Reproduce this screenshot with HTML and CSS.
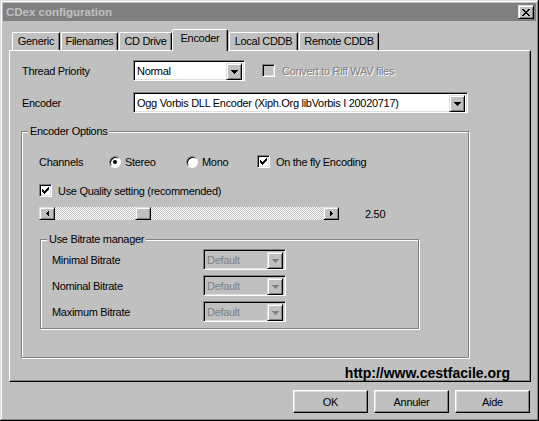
FILE: index.html
```html
<!DOCTYPE html>
<html lang="en">
<head>
    <meta charset="UTF-8">
    <title>CDex configuration</title>
    <link rel="stylesheet" href="styles.css">
</head>
<body>
<div class="window">
    <div class="titlebar">
        <span class="title">CDex configuration</span>
        <span class="close">
            <svg width="8" height="7" viewBox="0 0 8 7"><path d="M0 0h2v1H0zM6 0h2v1H6zM1 1h2v1H1zM5 1h2v1H5zM2 2h4v1H2zM3 3h2v1H3zM2 4h4v1H2zM1 5h2v1H1zM5 5h2v1H5zM0 6h2v1H0zM6 6h2v1H6z"/></svg>
        </span>
    </div>
    <div class="dialog">
        <div class="tabs">
            <div class="tab t-generic">Generic</div>
            <div class="tab t-files">Filenames</div>
            <div class="tab t-drive">CD Drive</div>
            <div class="tab t-enc active">Encoder</div>
            <div class="tab t-local">Local CDDB</div>
            <div class="tab t-remote">Remote CDDB</div>
        </div>
        <div class="panel">
            <div class="row">
                <span class="lbl">Thread Priority</span>
                <div class="select sel-prio">
                    <span class="val">Normal</span>
                    <span class="drop"><svg width="7" height="4" viewBox="0 0 7 4"><path d="M0 0h7v1H0zM1 1h5v1H1zM2 2h3v1H2zM3 3h1v1H3z"/></svg></span>
                </div>
                <div class="check-item disabled">
                    <span class="check"></span>Convert to Riff WAV files
                </div>
            </div>
            <div class="row">
                <span class="lbl">Encoder</span>
                <div class="select sel-enc">
                    <span class="val">Ogg Vorbis DLL Encoder (Xiph.Org libVorbis I 20020717)</span>
                    <span class="drop"><svg width="7" height="4" viewBox="0 0 7 4"><path d="M0 0h7v1H0zM1 1h5v1H1zM2 2h3v1H2zM3 3h1v1H3z"/></svg></span>
                </div>
            </div>

            <fieldset class="group enc-opts">
                <legend>Encoder Options</legend>
                <div class="line">
                    <span class="ch-lbl">Channels</span>
                    <div class="opt opt-stereo"><span class="radio on"></span>Stereo</div>
                    <div class="opt opt-mono"><span class="radio"></span>Mono</div>
                    <div class="opt"><span class="check">
                        <svg width="7" height="7" viewBox="0 0 7 7"><path d="M6 0h1v1H6zM5 1h2v1H5zM0 2h1v1H0zM4 2h3v1H4zM0 3h2v1H0zM3 3h3v1H3zM0 4h5v1H0zM1 5h3v1H1zM2 6h1v1H2z"/></svg>
                    </span>On the fly Encoding</div>
                </div>
                <div class="line quality">
                    <span class="check">
                        <svg width="7" height="7" viewBox="0 0 7 7"><path d="M6 0h1v1H6zM5 1h2v1H5zM0 2h1v1H0zM4 2h3v1H4zM0 3h2v1H0zM3 3h3v1H3zM0 4h5v1H0zM1 5h3v1H1zM2 6h1v1H2z"/></svg>
                    </span>Use Quality setting (recommended)
                </div>
                <div class="line slider-row">
                    <div class="scroll">
                        <span class="sbtn"><svg width="3" height="5" viewBox="0 0 3 5"><path d="M2 0h1v5H2zM1 1h1v3H1zM0 2h1v1H0z"/></svg></span>
                        <div class="track"><span class="thumb"></span></div>
                        <span class="sbtn"><svg width="3" height="5" viewBox="0 0 3 5"><path d="M0 0h1v5H0zM1 1h1v3H1zM2 2h1v1H2z"/></svg></span>
                    </div>
                    <span class="qval">2.50</span>
                </div>

                <fieldset class="group bitrate">
                    <legend>Use Bitrate manager</legend>
                    <div class="brow">
                        <span class="blbl">Minimal Bitrate</span>
                        <div class="select off">
                            <span class="val">Default</span>
                            <span class="drop"><svg width="7" height="4" viewBox="0 0 7 4"><path d="M0 0h7v1H0zM1 1h5v1H1zM2 2h3v1H2zM3 3h1v1H3z"/></svg></span>
                        </div>
                    </div>
                    <div class="brow">
                        <span class="blbl">Nominal Bitrate</span>
                        <div class="select off">
                            <span class="val">Default</span>
                            <span class="drop"><svg width="7" height="4" viewBox="0 0 7 4"><path d="M0 0h7v1H0zM1 1h5v1H1zM2 2h3v1H2zM3 3h1v1H3z"/></svg></span>
                        </div>
                    </div>
                    <div class="brow">
                        <span class="blbl">Maximum Bitrate</span>
                        <div class="select off">
                            <span class="val">Default</span>
                            <span class="drop"><svg width="7" height="4" viewBox="0 0 7 4"><path d="M0 0h7v1H0zM1 1h5v1H1zM2 2h3v1H2zM3 3h1v1H3z"/></svg></span>
                        </div>
                    </div>
                </fieldset>
            </fieldset>

            <div class="url">http://www.cestfacile.org</div>
        </div>
        <div class="buttons">
            <span class="btn">OK</span>
            <span class="btn">Annuler</span>
            <span class="btn">Aide</span>
        </div>
    </div>
</div>
</body>
</html>
```

FILE: styles.css
```css
body {
    margin: 0;
    font-family: "Liberation Sans", Arial, sans-serif;
    font-size: 11px;
    letter-spacing: -0.3px;
    color: #000;
}
.window {
    width: 539px;
    height: 421px;
    box-sizing: border-box;
    background: #c0c0c0;
    padding: 3px;
    box-shadow: inset -1px -1px #000, inset 1px 1px #dfdfdf, inset -2px -2px #808080, inset 2px 2px #fff;
}
.titlebar {
    height: 18px;
    background: #808080;
    display: flex;
    align-items: center;
    justify-content: space-between;
    padding: 0 2px 0 3px;
}
.title {
    color: #c0c0c0;
    font-weight: bold;
    font-size: 11.5px;
    letter-spacing: 0;
}
.close,
.drop,
.sbtn,
.thumb,
.btn {
    box-sizing: border-box;
    background: #c0c0c0;
    border: 1px solid;
    border-color: #dfdfdf #000 #000 #dfdfdf;
    box-shadow: inset 1px 1px #fff, inset -1px -1px #808080;
    display: flex;
    align-items: center;
    justify-content: center;
}
.close {
    width: 16px;
    height: 14px;
}
.dialog {
    padding: 8px 5px 0 6px;
}

/* tabs */
.tabs {
    display: flex;
    align-items: flex-end;
    height: 21px;
    padding-left: 3px;
}
.tab {
    height: 18px;
    box-sizing: border-box;
    border: 1px solid;
    border-bottom: 0;
    border-color: #fff #000 transparent #fff;
    box-shadow: inset -1px 0 #808080;
    border-radius: 2px 2px 0 0;
    padding-top: 2px;
    text-align: center;
    margin-left: 1px;
}
.tab:first-child { margin-left: 0; }
.tab.active {
    height: 22px;
    margin-bottom: -1px;
    margin-left: 0;
    position: relative;
    background: #c0c0c0;
}
.t-generic { width: 48px; }
.t-files { width: 57px; }
.t-drive { width: 53px; }
.t-enc { width: 56px; }
.t-local { width: 69px; }
.t-remote { width: 80px; }

.panel {
    height: 332px;
    box-sizing: border-box;
    border: 1px solid;
    border-color: #fff #000 #000 #fff;
    box-shadow: inset -1px -1px #808080;
    padding: 9px 20px 0 12px;
}
.row {
    display: flex;
    align-items: center;
    height: 21px;
}
.row + .row { margin-top: 11px; }
.lbl { width: 111px; }

/* combo boxes */
.select {
    display: flex;
    height: 21px;
    box-sizing: border-box;
    background: #fff;
    border: 1px solid;
    border-color: #808080 #fff #fff #808080;
    box-shadow: inset 1px 1px #000, inset -1px -1px #dfdfdf;
    padding: 2px;
}
.select .val {
    flex: 1;
    padding-left: 1px;
    line-height: 17px;
    white-space: nowrap;
    overflow: hidden;
}
.drop {
    width: 16px;
    height: 17px;
}
.sel-prio { width: 112px; }
.sel-enc { width: 335px; }
.select.off {
    width: 83px;
    background: #c0c0c0;
    color: #808080;
}
.select.off .drop svg { fill: #808080; }

/* check boxes and radios */
.check-item,
.opt,
.quality {
    display: flex;
    align-items: center;
}
.check-item { margin-left: 17px; }
.check {
    width: 13px;
    height: 13px;
    box-sizing: border-box;
    background: #fff;
    border: 1px solid;
    border-color: #808080 #fff #fff #808080;
    box-shadow: inset 1px 1px #000, inset -1px -1px #dfdfdf;
    margin-right: 6px;
    display: flex;
    align-items: center;
    justify-content: center;
    flex: none;
}
.disabled { color: #808080; text-shadow: 1px 1px #fff; }
.disabled .check { background: #c0c0c0; margin-right: 7px; }
.radio {
    width: 12px;
    height: 12px;
    box-sizing: border-box;
    border-radius: 50%;
    background: #fff;
    border: 1px solid;
    border-color: #808080 #fff #fff #808080;
    box-shadow: inset 1px 1px #000;
    margin-right: 4px;
    display: flex;
    align-items: center;
    justify-content: center;
}
.radio.on::after {
    content: "";
    width: 4px;
    height: 4px;
    border-radius: 50%;
    background: #000;
}

/* group boxes */
.group {
    margin: 0;
    min-width: 0;
    box-sizing: border-box;
    border: 1px solid #808080;
    box-shadow: inset 1px 1px #fff, 1px 1px #fff;
}
.group legend {
    padding: 0 2px;
    line-height: 13px;
    background: #c0c0c0;
}
.enc-opts {
    width: 448px;
    margin: 12px 0 0 -1px;
    padding: 17px 0 28px 17px;
}
.enc-opts > legend { margin-left: -11px; }
.line {
    display: flex;
    align-items: center;
    height: 13px;
}
.ch-lbl { width: 70px; }
.opt-stereo { width: 77px; }
.opt-mono { width: 71px; }
.quality { margin-top: 16px; }
.slider-row { margin-top: 10px; }
.scroll {
    width: 300px;
    height: 13px;
    display: flex;
}
.sbtn {
    width: 16px;
    height: 13px;
}
.track {
    flex: 1;
    display: flex;
    background: repeating-conic-gradient(#fff 0 25%, #c0c0c0 0 50%) 0 0 / 2px 2px;
}
.thumb {
    width: 16px;
    height: 13px;
    margin-left: 80px;
}
.qval { margin-left: 26px; }

.bitrate {
    width: 379px;
    margin: 13px 0 0 1px;
    padding: 3px 0 6px 11px;
}
.bitrate > legend { margin-left: -5px; }
.brow {
    display: flex;
    align-items: center;
    height: 21px;
}
.brow + .brow { margin-top: 5px; }
.blbl { width: 151px; }

.url {
    margin-top: 7px;
    text-align: right;
    font-weight: bold;
    font-size: 14px;
    line-height: 16px;
    letter-spacing: 0;
}

/* bottom buttons */
.buttons {
    display: flex;
    justify-content: flex-end;
    gap: 6px;
    margin-top: 8px;
    padding-right: 1px;
}
.btn {
    width: 75px;
    height: 23px;
    border-color: #fff #000 #000 #fff;
    box-shadow: inset -1px -1px #808080, inset 1px 1px #dfdfdf;
}
```
